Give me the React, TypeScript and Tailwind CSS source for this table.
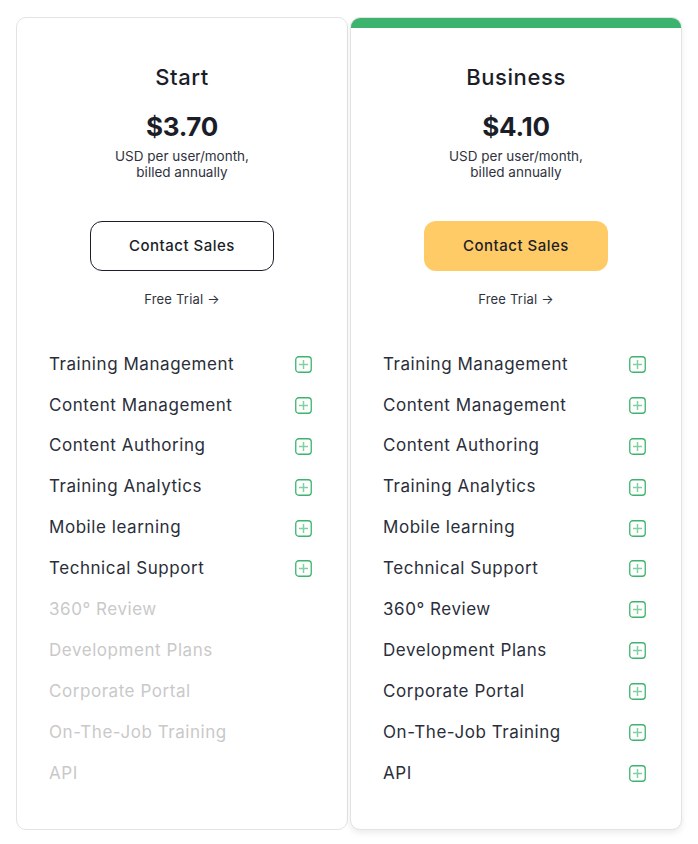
import React from 'react';

interface Plan {
  name: string;
  price: string;
  highlighted: boolean;
  included: number;
}

const FEATURES = [
  'Training Management',
  'Content Management',
  'Content Authoring',
  'Training Analytics',
  'Mobile learning',
  'Technical Support',
  '360° Review',
  'Development Plans',
  'Corporate Portal',
  'On-The-Job Training',
  'API',
];

const PLANS: Plan[] = [
  { name: 'Start', price: '$3.70', highlighted: false, included: 6 },
  { name: 'Business', price: '$4.10', highlighted: true, included: 11 },
];

const PlusBox = () => (
  <svg width="17" height="17" viewBox="0 0 17 17" fill="none">
    <rect x="0.75" y="0.75" width="15.5" height="15.5" rx="3" stroke="#3db46d" strokeWidth="1.3" />
    <path d="M8.5 4v9M4 8.5h9" stroke="#7fd2a0" strokeWidth="1.5" />
  </svg>
);

const PlanCard = ({ plan }: { plan: Plan }) => (
  <div
    className={
      'rounded-[10px] border border-[#e3e3e3] bg-white overflow-hidden flex flex-col ' +
      (plan.highlighted ? 'shadow-[0_3px_6px_rgba(0,0,0,0.08)]' : '')
    }
  >
    <div className={plan.highlighted ? 'h-[10px] bg-[#3db46d]' : 'h-[10px]'} />
    <div className="flex flex-col items-center pt-[35px]">
      <h3 className="text-[22px] leading-[28px] font-medium tracking-[0.6px] text-[#1b1e29]">{plan.name}</h3>
      <div className="mt-[20px] text-[26px] leading-[32px] font-bold tracking-[-0.3px] text-[#1b1e29]">{plan.price}</div>
      <p className="mt-[5px] text-[13.5px] leading-[16px] text-[#2f3340] text-center">
        USD per user/month,
        <br />
        billed annually
      </p>
      <button
        className={
          'mt-[41px] w-[184px] h-[50px] pt-[1px] rounded-[12px] text-[15px] font-medium tracking-[0.5px] text-[#1b1e29] ' +
          (plan.highlighted ? 'bg-[#ffcb66]' : 'border border-[#1b1e29] bg-white')
        }
      >
        Contact Sales
      </button>
      <a className="mt-[19px] text-[13px] leading-[18px] tracking-[0.2px] text-[#2f3340]">Free Trial →</a>
    </div>
    <ul className="mt-[36px] pl-[32px] pr-[35px] pb-[35px]">
      {FEATURES.map((f, i) => {
        const on = i < plan.included;
        return (
          <li key={f} className="h-[40.9px] flex items-center justify-between">
            <span className={'text-[17px] tracking-[0.55px] ' + (on ? 'text-[#2a2e3a]' : 'text-[#c9c9c9]')}>{f}</span>
            {on && <PlusBox />}
          </li>
        );
      })}
    </ul>
  </div>
);

export default function App() {
  return (
    <div className="w-[698px] min-h-[844px] bg-white pt-[17px] px-[16px]" style={{ fontFamily: 'Inter, "Noto Sans", sans-serif' }}>
      <div className="grid grid-cols-2 gap-[2px]">
        {PLANS.map(p => (
          <PlanCard key={p.name} plan={p} />
        ))}
      </div>
    </div>
  );
}
